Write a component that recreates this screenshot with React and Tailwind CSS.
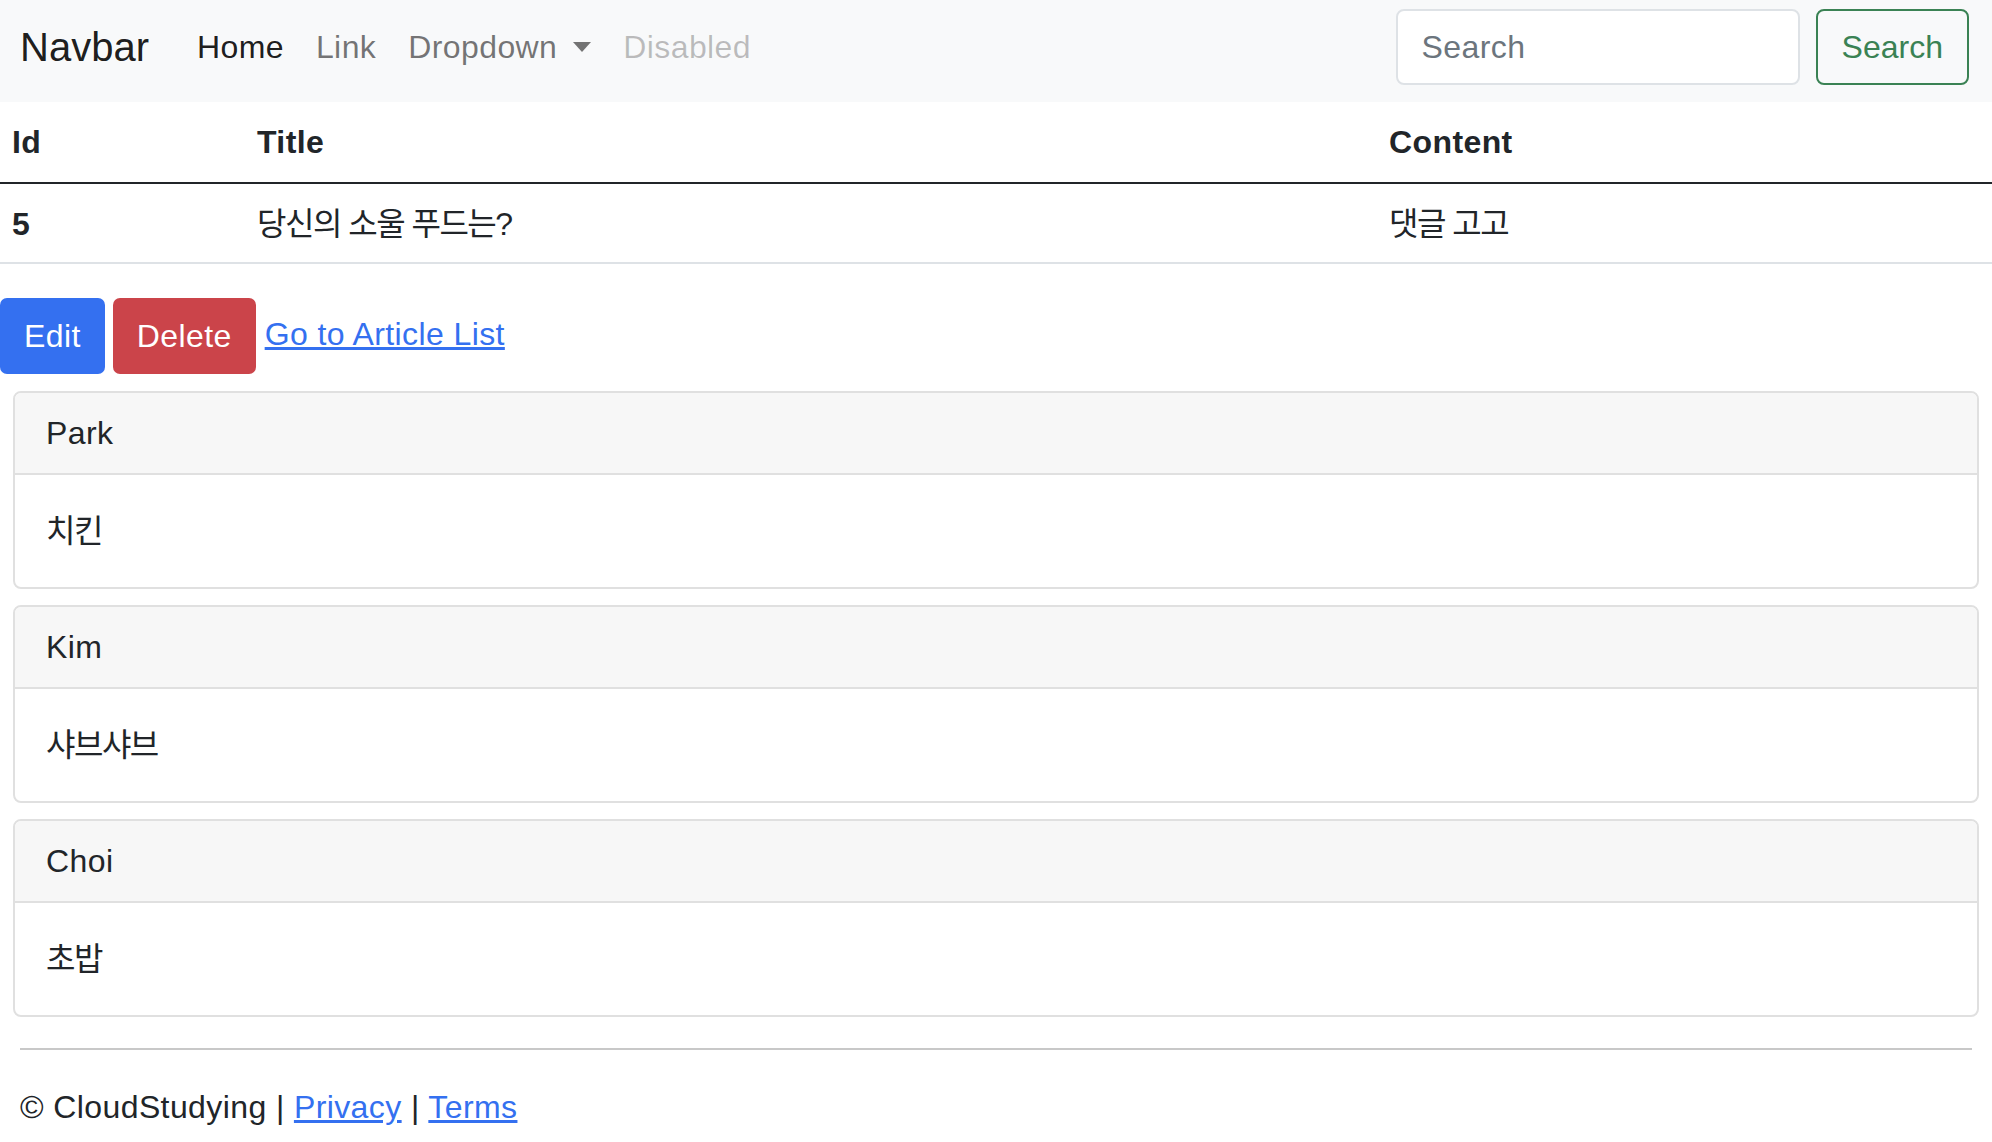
import React from 'react';

const comments = [
    { name: 'Park', body: '치킨' },
    { name: 'Kim', body: '샤브샤브' },
    { name: 'Choi', body: '초밥' },
];

const App = () => {
    return (
        <div className="min-h-screen bg-white text-[32px] leading-[48px] tracking-[0.4px] text-[#212529] font-['Liberation_Sans','Noto_Sans_CJK_KR',sans-serif]">

            {/* Navbar */}
            <nav className="h-[102px] bg-[#f8f9fa] flex items-center pl-[20px] pr-[23px] pb-[8px]">
                <a href="#" className="text-[40px] leading-[60px] tracking-normal text-black/90 mr-[32px]">Navbar</a>
                <ul className="flex items-center">
                    <li><a href="#" className="block px-[16px] text-black/90">Home</a></li>
                    <li><a href="#" className="block px-[16px] text-black/55">Link</a></li>
                    <li>
                        <a href="#" className="flex items-center px-[16px] text-black/55">
                            Dropdown
                            <span className="ml-[16px] w-0 h-0 border-t-[10px] border-t-[#737373] border-x-[9px] border-x-transparent"></span>
                        </a>
                    </li>
                    <li><span className="block px-[16px] text-black/25">Disabled</span></li>
                </ul>
                <form className="ml-auto flex items-center" onSubmit={(e) => e.preventDefault()}>
                    <input
                        type="search"
                        placeholder="Search"
                        className="w-[404px] h-[76px] px-[24px] bg-white border-2 border-[#dee2e6] rounded-[8px] outline-none tracking-[0.4px] placeholder:text-[#6c757d]"
                    />
                    <button className="ml-[16px] h-[76px] px-[24px] border-2 border-[#3a8254] text-[#3a8254] rounded-[8px] tracking-normal">
                        Search
                    </button>
                </form>
            </nav>

            {/* Article table */}
            <table className="w-full border-collapse text-left">
                <thead>
                    <tr className="border-b-2 border-[#212529]">
                        <th className="w-[245px] pl-[12px] py-[16px] font-bold">Id</th>
                        <th className="w-[1132px] pl-[12px] py-[16px] font-bold">Title</th>
                        <th className="pl-[12px] py-[16px] font-bold">Content</th>
                    </tr>
                </thead>
                <tbody>
                    <tr className="border-b-2 border-[#dee2e6]">
                        <th className="pl-[12px] pt-[16px] pb-[14px] font-bold">5</th>
                        <td className="pl-[12px] pt-[16px] pb-[14px] tracking-[-1.5px]">당신의 소울 푸드는?</td>
                        <td className="pl-[12px] pt-[16px] pb-[14px] tracking-[-1.5px]">댓글 고고</td>
                    </tr>
                </tbody>
            </table>

            {/* Actions */}
            <div className="mt-[34px] flex items-center">
                <a href="#" className="h-[76px] px-[24px] flex items-center bg-[#3470f0] text-white rounded-[7px]">Edit</a>
                <a href="#" className="ml-[8px] h-[76px] px-[24px] flex items-center bg-[#cb444a] text-white rounded-[7px]">Delete</a>
                <a href="#" className="ml-[9px] -mt-[4px] text-[#3470f0] underline">Go to Article List</a>
            </div>

            {/* Comments */}
            <div className="mt-[17px] mx-[13px] flex flex-col gap-[16px]">
                {comments.map((c) => (
                    <div key={c.name} className="border-2 border-[#e0e0e0] rounded-[8px] overflow-hidden">
                        <div className="bg-[#f7f7f7] border-b-2 border-[#e0e0e0] px-[31px] py-[16px]">{c.name}</div>
                        <div className="px-[31px] py-[32px] tracking-[-1.5px]">{c.body}</div>
                    </div>
                ))}
            </div>

            {/* Footer */}
            <footer className="mx-[20px] mt-[31px]">
                <hr className="border-0 border-t-2 border-[#c8c8c8]" />
                <p className="pt-[33px] pb-[12px]">
                    © CloudStudying | <a href="#" className="text-[#3470f0] underline">Privacy</a> | <a href="#" className="text-[#3470f0] underline">Terms</a>
                </p>
            </footer>
        </div>
    );
};

export default App;
